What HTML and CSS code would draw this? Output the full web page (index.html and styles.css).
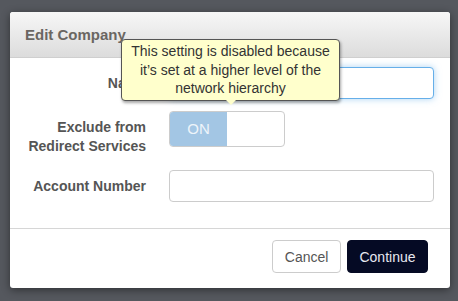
FILE: index.html
```html
<!DOCTYPE html>
<html lang="en">
<head>
<meta charset="UTF-8" />
<title>Edit Company</title>
<link rel="stylesheet" href="styles.css">
</head>
<body>
  <div class="modal">
    <div class="modal-header">Edit Company</div>

    <div class="modal-body">
      <div class="row row-name">
        <label class="label">Name</label>
        <input type="text" class="text-input focused" />
      </div>

      <div class="row row-exclude">
        <label class="label">Exclude from<br>Redirect Services</label>
        <div class="toggle">
          <span class="toggle-on">ON</span>
          <span class="toggle-off"></span>
        </div>
      </div>

      <div class="row row-account">
        <label class="label">Account Number</label>
        <input type="text" class="text-input" />
      </div>
    </div>

    <div class="modal-footer">
      <button class="btn btn-cancel">Cancel</button>
      <button class="btn btn-continue">Continue</button>
    </div>

    <!-- tooltip sits over the form -->
    <div class="tooltip">This setting is disabled because it’s set at a higher level of the network hierarchy</div>
  </div>
</body>
</html>
```

FILE: styles.css
```css
body {
  margin: 0;
  padding: 12px 8px 0 10px;
  height: 301px;
  box-sizing: border-box;
  background: #55585e;
  font-family: "Liberation Sans", Arial, sans-serif;
}

.modal {
  position: relative;
  width: 440px;
  background: #fff;
  border-radius: 3px;
  box-shadow: 0 2px 8px rgba(0,0,0,0.45);
}

.modal-header {
  height: 46px;
  box-sizing: border-box;
  padding: 14px 15px 0;
  font-size: 15px;
  font-weight: bold;
  color: #6a6662;
  background: linear-gradient(#f7f7f7, #dcdcdc);
  border-bottom: 1px solid #cfcfcf;
  border-radius: 3px 3px 0 0;
}

.modal-body {
  padding: 9px 16px 26px 15px;
}

.row {
  display: grid;
  grid-template-columns: 121px 265px;
  column-gap: 23px;
  align-items: center;
}

.row-exclude {
  margin-top: 12px;
  align-items: start;
}

.row-exclude .label {
  padding-top: 7px;
}

.row-account {
  margin-top: 14px;
}

.label {
  text-align: right;
  font-size: 14px;
  font-weight: bold;
  line-height: 19px;
  color: #555;
}

.text-input {
  height: 32px;
  box-sizing: border-box;
  margin: 0;
  border: 1px solid #ccc;
  border-radius: 4px;
  font-size: 14px;
  outline: none;
}

.text-input.focused {
  border-color: #66afe9;
  box-shadow: 0 0 7px rgba(102,175,233,0.55);
}

.toggle {
  display: flex;
  width: 116px;
  height: 36px;
  box-sizing: border-box;
  border: 1px solid #ccc;
  border-radius: 4px;
  overflow: hidden;
}

.toggle-on {
  width: 57px;
  background: #a3c6e4;
  color: #eef4fa;
  font-size: 15px;
  text-align: center;
  line-height: 34px;
}

.toggle-off {
  flex: 1;
}

.modal-footer {
  display: flex;
  justify-content: flex-end;
  gap: 6px;
  padding: 11px 22px 15px;
  border-top: 1px solid #d6d6d6;
}

.btn {
  height: 33px;
  margin: 0;
  border-radius: 4px;
  font-family: "Liberation Sans", Arial, sans-serif;
  font-size: 14px;
  padding: 0 11.5px;
}

.btn-cancel {
  background: #fff;
  border: 1px solid #ccc;
  color: #555;
}

.btn-continue {
  background: #050a24;
  border: 1px solid #050a24;
  color: #e8e8f0;
}

/* tooltip over the Name row */
.tooltip {
  position: absolute;
  left: 111px;
  top: 27px;
  width: 219px;
  height: 62px;
  box-sizing: border-box;
  padding: 2px 8px 0;
  background: #ffffcc;
  border: 1px solid #555;
  border-radius: 4px;
  box-shadow: 1px 2px 3px rgba(0,0,0,0.35);
  font-size: 14px;
  line-height: 18.5px;
  color: #333;
  text-align: center;
}

.tooltip::after {
  content: "";
  position: absolute;
  left: 104px;
  bottom: -5px;
  width: 0;
  height: 0;
  border-left: 5px solid transparent;
  border-right: 5px solid transparent;
  border-top: 5px solid #ffffcc;
}
```
